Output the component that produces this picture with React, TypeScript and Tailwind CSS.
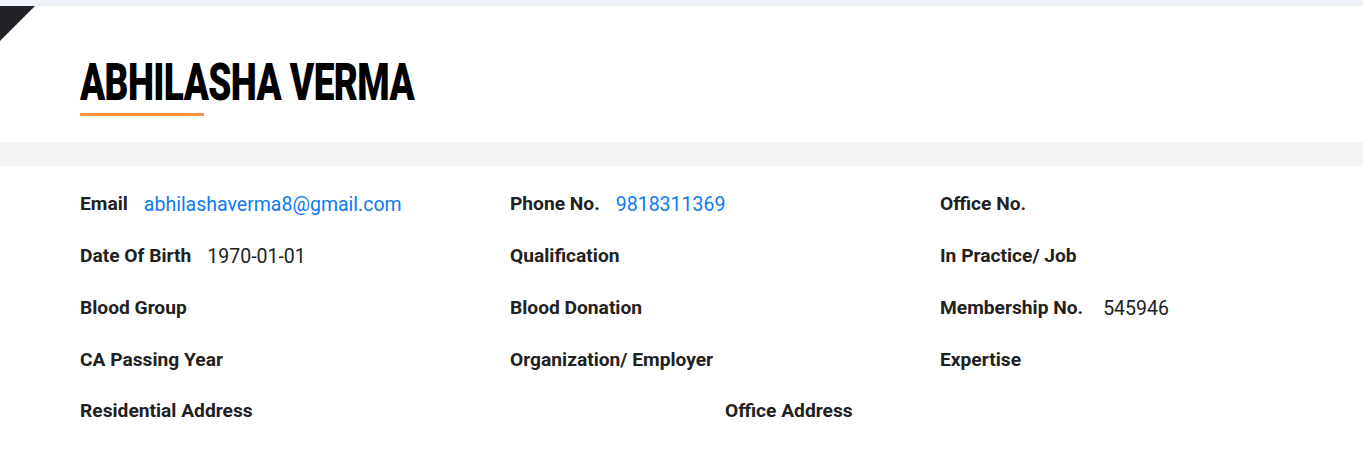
import React from 'react';

type Field = { label: string; value?: string; link?: boolean; gap?: string };

const rows: Field[][] = [
  [
    { label: 'Email', value: 'abhilashaverma8@gmail.com', link: true },
    { label: 'Phone No.', value: '9818311369', link: true },
    { label: 'Office No.' },
  ],
  [
    { label: 'Date Of Birth', value: '1970-01-01' },
    { label: 'Qualification' },
    { label: 'In Practice/ Job' },
  ],
  [
    { label: 'Blood Group' },
    { label: 'Blood Donation' },
    { label: 'Membership No.', value: '545946', gap: 'ml-5' },
  ],
  [
    { label: 'CA Passing Year' },
    { label: 'Organization/ Employer' },
    { label: 'Expertise' },
  ],
];

function Item({ f }: { f: Field }) {
  return (
    <div className="flex items-center h-[51.75px]">
      <span className="font-bold text-[#212121]">{f.label}</span>
      {f.value && (
        <span className={`${f.gap ?? 'ml-4'} text-[19.5px] ${f.link ? 'text-[#0b7bf2]' : 'text-[#212121]'}`}>
          {f.value}
        </span>
      )}
    </div>
  );
}

export default function App() {
  return (
    <div className="min-h-screen bg-white text-[19.2px]" style={{ fontFamily: 'Roboto, "Liberation Sans", sans-serif' }}>
      <div className="h-[6px] bg-[#eef2f9]" />

      {/* Header */}
      <div className="relative h-[136px] pl-[80px] pt-[49px]">
        <div className="absolute left-0 top-0 w-[35px] h-[35px] bg-[#202227] [clip-path:polygon(0_0,100%_0,0_100%)]" />
        <h1 className="font-black text-[37px] leading-[40px] tracking-[-0.6px] text-black uppercase origin-top scale-y-[1.4] inline-block">
          ABHILASHA VERMA
        </h1>
        <div className="mt-[17px] w-[124px] h-[3px] bg-[#ff8f45]" />
      </div>

      <div className="h-[24px] bg-[#f5f5f5]" />

      {/* Details */}
      <div className="pl-[80px] pt-[13px]">
        {rows.map((row, i) => (
          <div key={i} className="grid grid-cols-[430px_430px_430px]">
            {row.map((f) => (
              <Item key={f.label} f={f} />
            ))}
          </div>
        ))}
        <div className="grid grid-cols-[645px_645px]">
          <Item f={{ label: 'Residential Address' }} />
          <Item f={{ label: 'Office Address' }} />
        </div>
      </div>
    </div>
  );
}
